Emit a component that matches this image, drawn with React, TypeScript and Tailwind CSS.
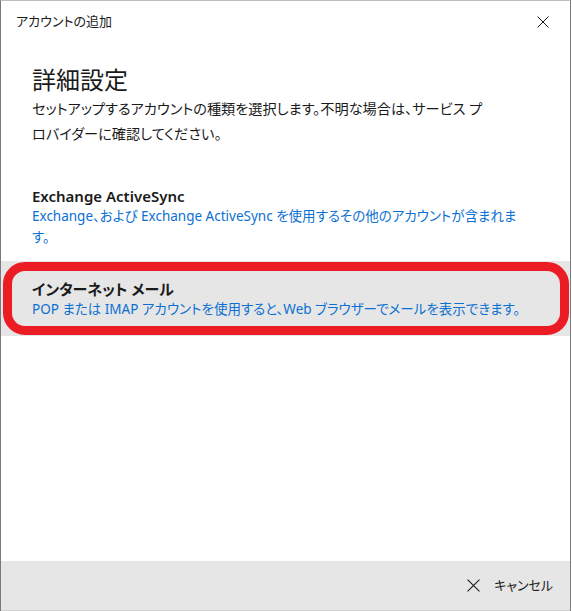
const font = "[font-family:'Noto_Sans','Noto_Sans_CJK_JP',sans-serif] [font-feature-settings:'palt']"

function CloseIcon({ size }: { size: number }) {
  return (
    <svg width={size} height={size} viewBox="0 0 12 12" fill="none">
      <path d="M0.5 0.5L11.5 11.5M11.5 0.5L0.5 11.5" stroke="#1a1a1a" strokeWidth="1" />
    </svg>
  )
}

const options = [
  {
    title: "Exchange ActiveSync",
    lines: ["Exchange、および Exchange ActiveSync を使用するその他のアカウントが含まれま", "す。"],
    selected: false,
  },
  {
    title: "インターネット メール",
    lines: ["POP または IMAP アカウントを使用すると、Web ブラウザーでメールを表示できます。"],
    selected: true,
  },
]

export default function App() {
  return (
    <div className={`w-[572px] h-[611px] bg-white ${font}`}>
      <div className="w-[571px] h-[611px] flex flex-col border-x border-t border-[#7a7a7a] border-t-[#bdbdbd]">
        <div className="h-[41px] flex items-center justify-between pl-[15px] pr-[21px]">
          <span className="text-[13px] text-[#1a1a1a]">アカウントの追加</span>
          <CloseIcon size={12} />
        </div>

        <div className="px-[31px] mt-[22px]">
          <h1 className="text-[24px] leading-[32px] text-[#1a1a1a]">詳細設定</h1>
          <p className="text-[14.2px] leading-[25px] text-[#1a1a1a] whitespace-nowrap">
            セットアップするアカウントの種類を選択します。不明な場合は、サービス プ
            <br />
            ロバイダーに確認してください。
          </p>
        </div>

        <div className="mt-[22px] flex flex-col">
          {options.map((option) => (
            <div
              key={option.title}
              className={`relative px-[31px] pt-[18px] ${
                option.selected ? "bg-[#e6e6e6] pb-[16px]" : "pb-[13px]"
              }`}
            >
              <div className="text-[15px] leading-[20px] font-semibold text-[#1a1a1a]">{option.title}</div>
              <div className="text-[13.5px] leading-[21px] text-[#0b70d2] whitespace-nowrap">
                {option.lines.map((line) => (
                  <div key={line}>{line}</div>
                ))}
              </div>
              {option.selected && (
                <div className="absolute left-[2px] right-[1px] top-[1px] bottom-[1px] rounded-[22px] border-[9px] border-[#ec1c24]" />
              )}
            </div>
          ))}
        </div>

        <div className="flex-1" />

        <div className="h-[50px] bg-[#e6e6e6] border-b border-[#d0d0d0] flex items-center justify-end pr-[17px]">
          <div className="flex items-center gap-[14px]">
            <CloseIcon size={13} />
            <span className="text-[13px] text-[#1a1a1a]">キャンセル</span>
          </div>
        </div>
      </div>
    </div>
  )
}
